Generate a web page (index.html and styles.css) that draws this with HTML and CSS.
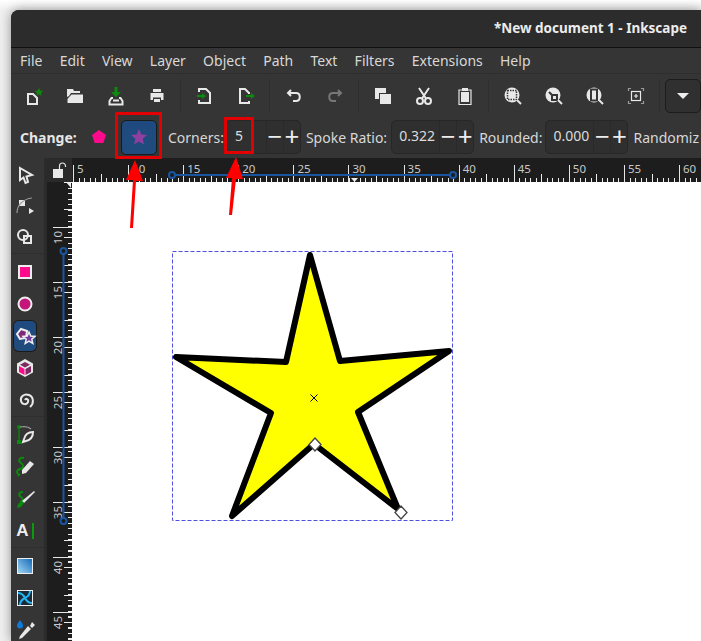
FILE: index.html
```html
<!DOCTYPE html>
<html lang="en">
<head>
  <meta charset="UTF-8">
  <title>New document 1 - Inkscape</title>
  <link rel="stylesheet" href="styles.css">
</head>
<body>
  <div class="window">
    <div class="titlebar">*New document 1 - Inkscape</div>
    <div class="menubar">
      <span>File</span><span>Edit</span><span>View</span><span>Layer</span><span>Object</span><span>Path</span><span>Text</span><span>Filters</span><span>Extensions</span><span>Help</span>
    </div>

    <div class="toolbar">
      <div class="cell"><svg viewBox="0 0 24 24"><path class="line" d="M6 10h5l4 4v6H6z"/><path class="green" d="M17 4l1.200 2.600 2.800.3-2 2 .5 2.800-2.500-1.400-2.500 1.400.5-2.800-2-2 2.800-.3z"/></svg></div>
      <div class="cell"><svg viewBox="0 0 24 24"><path class="fill" d="M4 5h6l1 2h6v2H8l-2 3-2 1z"/><path class="fill" d="M8.500 10.500H20V19H4.500V15z"/></svg></div>
      <div class="cell"><svg viewBox="0 0 24 24"><path class="green" d="M10.500 3h3v5H17l-5 5-5-5h3.500z"/><path class="line" d="M9 14H7.500L5.500 17v3.500h13V17l-2-3H15"/><path class="fill" d="M9 15.500h6v2H9z"/></svg></div>
      <div class="cell"><svg viewBox="0 0 24 24"><path class="fill" d="M8 5h8v3H8zM5.500 9h13v7h-2.500v-2.500H8V16H5.500zM9 15h6v3H9z"/></svg></div>
      <i class="sep"></i>
      <div class="cell"><svg viewBox="0 0 24 24"><path class="line" d="M6 8V5h7l4 4v10H6v-3"/><path class="green" d="M4 11h5V9l4 3-4 3v-2H4z"/></svg></div>
      <div class="cell"><svg viewBox="0 0 24 24"><path class="line" d="M15 10V9l-4-4H6v14h9v-2"/><path class="green" d="M12 11h5V9l4 3-4 3v-2h-5z"/></svg></div>
      <i class="sep"></i>
      <div class="cell"><svg viewBox="0 0 24 24"><path class="line" d="M9 6L6 9l3 3M6 9h8c5 0 5 8 0 8h-3"/></svg></div>
      <div class="cell"><svg viewBox="0 0 24 24"><path class="line off" d="M15 6l3 3-3 3M18 9h-8c-5 0-5 8 0 8h3"/></svg></div>
      <i class="sep"></i>
      <div class="cell"><svg viewBox="0 0 24 24"><rect class="fill" x="4" y="4" width="11" height="11"/><rect class="copy-front" x="8.500" y="9.500" width="12" height="11"/></svg></div>
      <div class="cell"><svg viewBox="0 0 24 24"><circle class="line" cx="8" cy="17" r="3"/><circle class="line" cx="16" cy="17" r="3"/><path class="line" d="M7 4l7 10.500M17 4l-7 10.500"/></svg></div>
      <div class="cell"><svg viewBox="0 0 24 24"><path class="line thin" d="M9 6H6v14.500h12V6h-3"/><path class="fill" d="M8 8h8v10H8zM9 4h6v3H9z"/></svg></div>
      <i class="sep"></i>
      <div class="cell"><svg viewBox="0 0 24 24"><circle class="fill" cx="11" cy="11" r="7.500"/><rect class="dots" x="6.500" y="6.500" width="9" height="9"/><path class="line" d="M16 16l4 4"/></svg></div>
      <div class="cell"><svg viewBox="0 0 24 24"><circle class="fill" cx="11" cy="11" r="7.500"/><path class="cut" d="M7 8l3 3h5v5h-5v-5z"/><path class="line" d="M16 16l4 4"/></svg></div>
      <div class="cell"><svg viewBox="0 0 24 24"><circle class="fill" cx="11" cy="11" r="7.500"/><rect class="cut" x="8" y="5.500" width="6" height="11"/><path class="line" d="M16 16l4 4"/></svg></div>
      <div class="cell"><svg viewBox="0 0 24 24"><path class="line thin dim" d="M4.500 7V4.500H7M17 4.500h2.500V7M19.500 17v2.500H17M7 19.500H4.500V17"/><rect class="line thin" x="7.500" y="7.500" width="9" height="9"/><path class="line thin" d="M10 12h4M12 10v4"/></svg></div>
      <i class="sep"></i>
      <button class="more"><i class="caret"></i></button>
    </div>

    <div class="controls">
      <b>Change:</b>
      <svg class="pentagon" width="16" height="16" viewBox="0 0 16 16"><path d="M8 1l7 5-2.700 8H3.700L1 6z"/></svg>
      <div class="star-toggle"><svg width="18" height="18" viewBox="0 0 18 18"><path d="M9 1l2.300 5.400 5.700.5-4.300 3.800 1.300 5.800L9 13.500l-5 3 1.300-5.800L1 6.900l5.700-.5z"/></svg></div>
      <label class="first">Corners:</label>
      <div class="spin small"><span class="val">5</span><span class="btn">&minus;</span><span class="btn">+</span></div>
      <label class="spoke">Spoke Ratio:</label>
      <div class="spin"><span class="val">0.322</span><span class="btn">&minus;</span><span class="btn">+</span></div>
      <label>Rounded:</label>
      <div class="spin"><span class="val">0.000</span><span class="btn">&minus;</span><span class="btn">+</span></div>
      <label>Randomiz</label>
    </div>

    <div class="workspace">
      <div class="toolbox">
        <div class="tool"><svg viewBox="0 0 24 24"><path class="line" d="M7 6l12 7-5.500 1.500L15 20l-2.500 1-2-5.500L7 18z"/></svg></div>
        <div class="tool"><svg viewBox="0 0 24 24"><rect class="fill" x="6" y="7" width="6" height="6"/><path class="line thin dim" d="M4 20c0-8 6-14 15-15"/><path class="fill" d="M16 15l5 3-5 3z"/></svg></div>
        <div class="tool"><svg viewBox="0 0 24 24"><circle class="line" cx="10" cy="10" r="5"/><rect class="line" x="11" y="11" width="7" height="7"/></svg></div>
        <i class="rule"></i>
        <div class="tool"><svg viewBox="0 0 24 24"><rect class="shape" x="6" y="6" width="12" height="12"/></svg></div>
        <div class="tool"><svg viewBox="0 0 24 24"><circle class="shape purple" cx="12" cy="12" r="6.500"/></svg></div>
        <div class="tool active"><svg viewBox="0 0 24 24"><path class="shape dark" d="M8 5l6 2-1 7-6 1-3-5z"/><path class="shape violet" d="M16 8l1.800 4 4.200.4-3.200 2.800 1 4.200-3.800-2.300-3.800 2.300 1-4.200-3.200-2.800 4.200-.4z"/></svg></div>
        <div class="tool"><svg viewBox="0 0 24 24"><path class="fill" d="M12 3l8 4.500v9L12 21l-8-4.500v-9z"/><path class="pink" d="M6 10l5.500 3v6L6 16z"/><path class="plum" d="M12.500 13l5.500-3v6l-5.500 3zM12 6l5 2.700-5 2.800-5-2.800z"/></svg></div>
        <div class="tool"><svg viewBox="0 0 24 24"><path class="line" d="M12 12c1-2 4-1 3 2s-6 3-7-1 3-8 8-6 5 9 1 12"/></svg></div>
        <i class="rule"></i>
        <div class="tool"><svg viewBox="0 0 24 24"><rect class="green" x="4" y="17" width="4" height="4"/><circle class="green" cx="6" cy="4" r="2"/><path class="line thin green-line" d="M6 5v12"/><path class="line thin dim" d="M7 4c5-1 9 0 11 2"/><path class="line" d="M20 9c-5 0-8 3-9 7l-1 3 3-1c4-1 7-4 7-9z"/></svg></div>
        <div class="tool"><svg viewBox="0 0 24 24"><path class="line green-line" d="M11 3c-5-1-6 3-3 5s3 5-1 6-3 4-2 5"/><path class="fill" d="M17 6l4 3-8 9-4 1 0-4z"/><path class="green" d="M4 18l4 1-3 3z"/></svg></div>
        <div class="tool"><svg viewBox="0 0 24 24"><path class="line green-line" d="M10 5c-4 0-5 3-2 5s2 4-1 5"/><path class="fill" d="M21 4l1 1-11 11-2-2z"/><path class="green" d="M5 17l4-3 2 2-3 4-4 1z"/></svg></div>
        <div class="tool"><span class="text-a">A</span><i class="text-cursor"></i></div>
        <i class="rule"></i>
        <div class="tool"><svg viewBox="0 0 24 24"><defs><linearGradient id="grad" x1="1" y1="0" x2="0" y2="1"><stop offset="0" stop-color="#1168b8"/><stop offset="1" stop-color="#a6d8f4"/></linearGradient></defs><rect x="4.500" y="4.500" width="15" height="15" fill="url(#grad)" stroke="#eee"/></svg></div>
        <div class="tool"><svg viewBox="0 0 24 24"><rect x="4.500" y="4.500" width="15" height="15" fill="#1b2a38" stroke="#eee"/><path class="swirl" d="M12 12C10 8 7 7 5 7M12 12c4-2 5-5 5-7M12 12c2 4 5 5 7 5M12 12c-4 2-5 5-5 7"/></svg></div>
        <div class="tool"><svg viewBox="0 0 24 24"><path d="M7 2c2 3 3 4 3 5.500a3 3 0 0 1-6 0C4 6 5 5 7 2z" fill="#0d7bdc"/><path class="fill" d="M19 4l3 3-3 3-2-2zM15 8l3 3-9 9-3 1 1-3z"/></svg></div>
      </div>

      <div class="rulers">
        <div class="corner"><svg width="18" height="18" viewBox="0 0 18 18"><path class="fill" d="M3 8h10v9H3z"/><path class="line thin" d="M9.500 8V5a3 3 0 0 1 6 0v1"/></svg></div>
        <div class="ruler-top">
          <span>5</span><span>10</span><span>15</span><span>20</span><span>25</span><span>30</span><span>35</span><span>40</span><span>45</span><span>50</span><span>55</span><span>60</span>
        </div>
        <div class="ruler-left">
          <span><em>10</em></span><span><em>15</em></span><span><em>20</em></span><span><em>25</em></span><span><em>30</em></span><span><em>35</em></span><span><em>40</em></span><span><em>45</em></span>
        </div>
        <div class="canvas">
          <svg class="drawing" viewBox="72 182 629 459">
            <rect class="bbox" x="172.500" y="251.500" width="280" height="269"/>
            <path class="star" d="M310 255L340 361 449 351 358 412 398 509 314 444 232 516 271 413 176 357 286 362z"/>
            <path class="cross" d="M310.500 394.500l7 7M317.500 394.500l-7 7"/>
            <path class="handle" d="M315 438l6 6.500-6 6.500-6-6.500z"/>
            <path class="handle" d="M401 506l6 6.500-6 6.500-6-6.500z"/>
          </svg>
        </div>
      </div>
    </div>
  </div>

  <svg class="overlay" viewBox="0 0 701 641">
    <path class="guide" d="M172 175H453M63.500 251V521"/>
    <circle class="guide-end" cx="172" cy="175" r="3"/>
    <circle class="guide-end" cx="453" cy="175" r="3"/>
    <circle class="guide-end" cx="63.500" cy="251" r="3"/>
    <circle class="guide-end" cx="63.500" cy="521" r="3"/>
    <path class="pointer" d="M351 178h7l-3.500 4zM66 182h5v6z"/>
    <rect class="mark" x="116.500" y="113.500" width="44" height="44"/>
    <rect class="mark" x="225.500" y="118.500" width="27" height="34"/>
    <path class="arrow" d="M130 228l3-48h-7l9-20 8 21h-7l-3 47z"/>
    <path class="arrow" d="M229 215l3-37h-6l10-21 7 22h-7l-4 36z"/>
  </svg>
</body>
</html>
```

FILE: styles.css
```css
body {
  margin: 0;
  width: 701px;
  height: 641px;
  overflow: hidden;
  position: relative;
  background: linear-gradient(to bottom, #fff, #f0f0f0 10px);
  font-family: "Noto Sans", sans-serif;
  color: #e2e2e2;
}
.window {
  margin: 10px 0 0 11px;
  width: 690px;
  height: 631px;
  border-radius: 8px 0 0 0;
  background: #353535;
  box-shadow: 0 0 12px rgba(0, 0, 0, 0.4);
  overflow: hidden;
}
.titlebar {
  height: 38px;
  line-height: 37px;
  box-sizing: border-box;
  padding-right: 14px;
  text-align: right;
  font-size: 13.500px;
  font-weight: 700;
  color: #ececec;
  background: #2c2c2c;
  border-bottom: 1px solid #111;
}
.menubar {
  display: flex;
  gap: 17.250px;
  height: 25px;
  line-height: 25px;
  padding-left: 9px;
  font-size: 14px;
  color: #d8d8d8;
  border-bottom: 1px solid #2e2e2e;
}
.toolbar {
  display: flex;
  align-items: center;
  height: 44px;
  padding-left: 2px;
}
.cell {
  flex: 0 0 41px;
  display: flex;
  justify-content: center;
}
.cell svg, .tool svg {
  flex: none;
  width: 24px;
  height: 24px;
}
.sep {
  width: 1px;
  height: 34px;
  margin: 0 3px;
  background: #2e2e2e;
}
.more {
  width: 36px;
  height: 34px;
  margin-left: 2px;
  padding: 0;
  display: flex;
  align-items: center;
  justify-content: center;
  background: #303030;
  border: 1px solid #1c1c1c;
  border-radius: 5px;
}
.caret {
  border: 6px solid transparent;
  border-top-color: #eee;
  border-bottom: 0;
}

.line { fill: none; stroke: #e8e8e8; stroke-width: 2; }
.thin { stroke-width: 1.200; }
.dim { stroke: #999; }
.off { stroke: #777; }
.fill { fill: #e8e8e8; }
.green { fill: #0b8a0b; }
.green-line { stroke: #0b8a0b; }
.dots { fill: none; stroke: #353535; stroke-width: 1.500; stroke-dasharray: 1.500 1; }
.cut { fill: none; stroke: #353535; stroke-width: 2; }
.copy-front { fill: #e8e8e8; stroke: #353535; }
.shape { fill: #ff0a8c; stroke: #eee; stroke-width: 2; }
.shape.purple { fill: #c4167a; }
.shape.dark { fill: #7c2a78; }
.shape.violet { fill: #7040a0; stroke-width: 1.500; }
.pink { fill: #ff0a8c; }
.plum { fill: #7c2a62; }
.swirl { fill: none; stroke: #25b4f0; stroke-width: 2; }

.controls {
  display: flex;
  align-items: center;
  box-sizing: border-box;
  height: 40px;
  padding: 0 0 2px 9px;
  font-size: 14px;
  color: #d8d8d8;
  white-space: nowrap;
}
.controls > * {
  flex-shrink: 0;
}
.controls b {
  width: 71px;
  color: #e6e6e6;
}
.pentagon {
  fill: #ff0a8c;
  margin-right: 14px;
}
.star-toggle {
  width: 36px;
  height: 35px;
  box-sizing: border-box;
  display: flex;
  align-items: center;
  justify-content: center;
  background: linear-gradient(to bottom, #1f4a80, #204c7c);
  border: 1px solid #1a1a1a;
  border-radius: 5px;
  fill: #8f3f9f;
}
.controls label {
  margin: 0 3px 0 5px;
}
.controls label.first {
  margin: 0 2px 0 11px;
}
.controls label.spoke {
  margin-right: 4px;
}
.spin {
  display: flex;
  height: 34px;
  width: 83px;
  box-sizing: border-box;
  line-height: 30px;
  background: #2f2f2f;
  border: 1px solid #272727;
  border-radius: 5px;
}
.spin.small {
  width: 75px;
}
.val {
  flex: 1;
  padding-left: 7px;
  color: #dcdcdc;
}
.spin.small .val {
  padding-left: 8px;
}
.btn {
  flex: 0 0 17px;
  box-sizing: border-box;
  text-align: center;
  border-left: 1px solid #2a2a2a;
  font-size: 26px;
  color: #ececec;
}

.workspace {
  display: flex;
  height: 483px;
}
.toolbox {
  flex: 0 0 22px;
  min-width: 0;
  display: flex;
  flex-direction: column;
  padding: 0 8px 0 3px;
  border-right: 2px solid #2b2b2b;
  margin-right: 1px;
}
.tool {
  flex: 0 0 32px;
  display: flex;
  align-items: center;
  justify-content: center;
}
.tool:first-child {
  flex-basis: 31px;
}
.tool.active {
  margin: 1px 0;
  flex-basis: 30px;
  background: linear-gradient(to bottom, #1f4a80, #204c7c);
  border-radius: 5px;
  box-shadow: 0 0 0 1px #1a1a1a;
}
.rule {
  flex: 0 0 3px;
  margin: 0 -8px 0 -3px;
  background: linear-gradient(to bottom, #2e2e2e 1px, transparent 1px);
}
.text-a {
  font: 700 17px "Liberation Sans", sans-serif;
  color: #eee;
}
.text-cursor {
  flex: none;
  width: 2px;
  height: 16px;
  margin-left: 3px;
  background: #0b9a0b;
}

.rulers {
  flex: 1;
  display: grid;
  grid-template-columns: 26px 1fr;
  grid-template-rows: 24px 1fr;
  margin-left: -1px;
  min-width: 0;
}
.corner {
  background: #2a2a2a;
  display: flex;
  align-items: center;
  justify-content: center;
}
.ruler-top, .ruler-left {
  font-size: 11.500px;
  color: #c9c9c9;
  background-color: #1d1d1d;
  overflow: hidden;
}
.ruler-top {
  display: flex;
  padding-left: 1px;
  background-image:
    repeating-linear-gradient(90deg, #eee 0 1px, transparent 1px 5.510px),
    repeating-linear-gradient(90deg, #eee 0 1px, transparent 1px 27.550px);
  background-size: 100% 4px, 100% 8px;
  background-position: 1px bottom, 1px bottom;
  background-repeat: no-repeat;
}
.ruler-top span {
  flex: 0 0 55.100px;
  box-sizing: border-box;
  height: 17px;
  margin-top: 7px;
  padding-left: 3px;
  line-height: 7px;
  border-left: 1px solid #e6e6e6;
}
.ruler-left {
  display: flex;
  flex-direction: column;
  padding-top: 45px;
  border-left: 1px solid #2a2a2a;
  background-image:
    repeating-linear-gradient(180deg, #eee 0 1px, transparent 1px 5.500px),
    repeating-linear-gradient(180deg, #eee 0 1px, transparent 1px 27.500px);
  background-size: 4px 100%, 8px 100%;
  background-position: right 0, right 0;
  background-repeat: no-repeat;
}
.ruler-left span {
  flex: 0 0 55px;
  box-sizing: border-box;
  margin-left: 6px;
  padding-top: 3px;
  border-top: 1px solid #e6e6e6;
}
.ruler-left em {
  display: block;
  width: 13px;
  margin-left: -2px;
  line-height: 13px;
  font-style: normal;
  writing-mode: vertical-rl;
  transform: rotate(180deg);
}
.canvas {
  background: #fff;
  overflow: hidden;
}
.drawing {
  display: block;
  width: 629px;
  height: 459px;
}
.bbox {
  fill: none;
  stroke: #4f4fe0;
  stroke-dasharray: 4 2;
}
.star {
  fill: #ff0;
  stroke: #000;
  stroke-width: 6;
  stroke-linejoin: round;
}
.cross {
  fill: none;
  stroke: #000;
}
.handle {
  fill: #fff;
  stroke: #444;
  stroke-width: 1.300;
}
.overlay {
  position: absolute;
  left: 0;
  top: 0;
  width: 701px;
  height: 641px;
}
.guide {
  fill: none;
  stroke: #1a56a0;
  stroke-width: 2;
}
.guide-end {
  fill: #1d1d1d;
  stroke: #1a56a0;
  stroke-width: 2;
}
.pointer {
  fill: #eee;
}
.mark {
  fill: none;
  stroke: #e30000;
  stroke-width: 3;
}
.arrow {
  fill: #f00;
}
```
